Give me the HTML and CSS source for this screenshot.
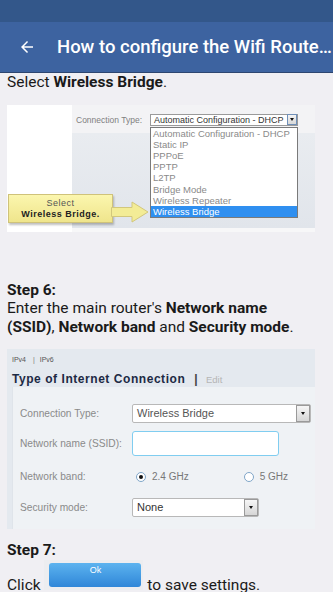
FILE: index.html
```html
<!DOCTYPE html>
<html>
<head>
<meta charset="utf-8">
<link rel="stylesheet" href="styles.css">
</head>
<body>
<div class="status"></div>
<header class="appbar">
  <svg class="back" width="18" height="18" viewBox="0 0 24 24"><path d="M20 11H7.83l5.59-5.59L12 4l-8 8 8 8 1.41-1.41L7.83 13H20v-2z" fill="#fff"/></svg>
  <h1 class="title">How to configure the Wifi Route…</h1>
</header>
<main class="content">
  <p class="line">Select <b>Wireless Bridge</b>.</p>

  <div class="shot1">
    <div class="s1-white"></div>
    <div class="s1-right">
      <div class="s1-band">
        <span class="s1-label">Connection Type:</span>
        <div class="s1-select">
          <span>Automatic Configuration - DHCP</span>
          <span class="dd-btn"><i class="tri"></i></span>
        </div>
      </div>
      <div class="s1-gray"></div>
    </div>
    <ul class="s1-list">
      <li>Automatic Configuration - DHCP</li>
      <li>Static IP</li>
      <li>PPPoE</li>
      <li>PPTP</li>
      <li>L2TP</li>
      <li>Bridge Mode</li>
      <li>Wireless Repeater</li>
      <li class="sel">Wireless Bridge</li>
    </ul>
    <div class="callout">Select<br><b>Wireless Bridge.</b></div>
    <svg class="arrow" width="38" height="22" viewBox="0 0 38 22"><path d="M0.5 6.5 H21 V1 L37 11 L21 21 V15.5 H0.5 Z" fill="#f3ec96" stroke="#d2c77c" stroke-width="1"/></svg>
  </div>

  <p class="line gap-top"><b>Step 6:</b><br>Enter the main router's <b>Network name (SSID)</b>, <b>Network band</b> and <b>Security mode</b>.</p>

  <div class="shot2">
    <div class="s2-head">
      <div class="s2-tabs">IPv4 <span class="bar">|</span> IPv6</div>
      <div class="s2-title"><b>Type of Internet Connection</b> <span class="pipe">|</span> <span class="edit">Edit</span></div>
    </div>
    <div class="s2-panel">
      <div class="row r1">
        <span class="lbl">Connection Type:</span>
        <div class="sel-box wide"><span>Wireless Bridge</span><span class="dd-btn big"><i class="tri"></i></span></div>
      </div>
      <div class="row r2">
        <span class="lbl">Network name (SSID):</span>
        <div class="input"></div>
      </div>
      <div class="row r3">
        <span class="lbl">Network band:</span>
        <div class="radios">
          <span class="radio on"></span><span class="rtxt">2.4 GHz</span>
          <span class="radio"></span><span class="rtxt">5 GHz</span>
        </div>
      </div>
      <div class="row r4">
        <span class="lbl">Security mode:</span>
        <div class="sel-box narrow"><span>None</span><span class="dd-btn big"><i class="tri"></i></span></div>
      </div>
    </div>
  </div>

  <p class="line step7"><b>Step 7:</b><br>Click <span class="okwrap"><span class="okbtn">Ok</span></span> to save settings.</p>
</main>
</body>
</html>
```

FILE: styles.css
```css
* { box-sizing: border-box; }
html, body { margin: 0; padding: 0; }
body {
  width: 333px;
  height: 592px;
  overflow: hidden;
  background: #f0eff3;
  font-family: Roboto, "Noto Sans", sans-serif;
  color: #1a1a1a;
}
.status { height: 22px; background: #33578a; }
.appbar {
  height: 51px;
  background: #3d63a0;
  border-bottom: 1px solid #2d4670;
  display: flex;
  align-items: center;
  padding-left: 18px;
}
.back { flex: none; }
.title {
  margin: 0 0 0 21px;
  font-size: 18.5px;
  font-weight: 500;
  color: #fff;
  white-space: nowrap;
}
.content { padding: 0 18px 0 7px; }
.line {
  margin: 0;
  font-size: 15.5px;
  line-height: 18.6px;
}
.line b { font-weight: 700; }
.gap-top { margin-top: 49px; }

/* screenshot 1 */
.shot1 {
  position: relative;
  margin-top: 13px;
  width: 308px;
  height: 127px;
  display: flex;
  background: #f7f7f8;
  font-family: "Liberation Sans", Arial, sans-serif;
}
.s1-white { width: 65px; height: 127px; background: #fff; }
.s1-right { flex: 1; display: flex; flex-direction: column; padding-bottom: 4px; }
.s1-band {
  height: 28px;
  background: #f3f3f5;
  display: flex;
  align-items: center;
  padding: 2px 0 0 4px;
}
.s1-label { font-size: 8.5px; color: #808080; width: 74px; }
.s1-select {
  width: 148px;
  height: 12px;
  background: #fff;
  border: 1px solid #9a9a9a;
  display: flex;
  align-items: center;
  justify-content: space-between;
  padding-left: 3px;
  font-size: 9px;
  color: #333;
}
.dd-btn {
  width: 10px;
  height: 11px;
  border: 1px solid #6f8fb8;
  background: linear-gradient(#f4f4f4, #d8d8d8);
  display: flex;
  align-items: center;
  justify-content: center;
}
.tri {
  width: 0; height: 0;
  border-left: 2.5px solid transparent;
  border-right: 2.5px solid transparent;
  border-top: 3px solid #111;
}
.s1-gray { flex: 1; background: linear-gradient(180deg, #e9ecf0, #e1e5eb); }
.s1-list {
  position: absolute;
  left: 143px;
  top: 22px;
  width: 148px;
  margin: 0;
  padding: 0;
  list-style: none;
  background: #fff;
  border: 1px solid #7a7a7a;
}
.s1-list li {
  height: 11.2px;
  line-height: 11.2px;
  font-size: 9.5px;
  color: #8a8a8a;
  padding-left: 2px;
}
.s1-list li.sel { background: #2f8ff0; color: #fff; }
.callout {
  position: absolute;
  left: 1px;
  top: 89px;
  width: 105px;
  height: 29px;
  background: linear-gradient(#fbf6ae, #efe58c);
  border: 1px solid #cfc27a;
  box-shadow: 1px 2px 2px rgba(0,0,0,0.25);
  text-align: center;
  font-size: 9px;
  line-height: 11px;
  padding-top: 3px;
  color: #555;
  letter-spacing: 0.5px;
}
.callout b { color: #222; }
.arrow { position: absolute; left: 104px; top: 96px; }

/* screenshot 2 */
.shot2 {
  margin-top: 13px;
  width: 308px;
  height: 180px;
  background: #e4e9ef;
  font-family: "Liberation Sans", Arial, sans-serif;
  display: flex;
  flex-direction: column;
}
.s2-head { height: 38px; padding: 5px 0 0 5px; }
.s2-tabs { font-size: 7px; color: #555; height: 11px; line-height: 11px; }
.s2-tabs .bar { margin: 0 3px 0 5px; color: #777; }
.s2-title { margin-top: 7px; font-size: 12px; color: #1d2a44; letter-spacing: 0.55px; }
.s2-title .pipe { margin: 0 4px 0 5px; color: #444; font-weight: bold; }
.s2-title .edit { color: #b5b5b5; font-size: 9.5px; letter-spacing: 0; }
.s2-panel {
  flex: 1;
  margin-left: 5px;
  background: #eff2f5;
  border-left: 1px solid #dfe4ea;
  padding: 16px 0 0 7px;
  display: flex;
  flex-direction: column;
}
.row { display: flex; align-items: center; }
.r1 { height: 20px; margin-bottom: 7px; }
.r2 { height: 26px; margin-bottom: 7px; }
.r3 { height: 27px; margin-bottom: 6px; }
.r4 { height: 22px; }
.lbl { width: 112px; font-size: 10.2px; color: #8a8a8a; }
.sel-box {
  height: 19px;
  background: #fff;
  border: 1px solid #b8b8b8;
  border-radius: 2px;
  display: flex;
  align-items: center;
  justify-content: space-between;
  padding-left: 4px;
  font-size: 11px;
  color: #555;
}
.sel-box.wide { width: 179px; }
.sel-box.narrow { width: 127px; color: #333; }
.dd-btn.big { width: 14px; height: 17px; border: 1px solid #9a9a9a; background: linear-gradient(#f6f6f6, #d6d6d6); }
.input {
  width: 147px;
  height: 25px;
  background: #fff;
  border: 1.5px solid #80cdf0;
  border-radius: 3px;
}
.radios { display: flex; align-items: center; font-size: 10px; color: #777; }
.radio {
  width: 10px; height: 10px;
  border-radius: 50%;
  border: 1px solid #7fa6c8;
  background: #fff;
  margin-left: 4px;
  display: flex;
  align-items: center;
  justify-content: center;
}
.radio.on::after { content: ""; width: 4px; height: 4px; border-radius: 50%; background: #111; }
.rtxt { margin-left: 6px; }
.rtxt:nth-of-type(2) { margin-right: 51px; }

.step7 { margin-top: 12px; }
.okwrap {
  display: inline-block;
  width: 99px;
  height: 30px;
  overflow: hidden;
  background: #ecedf0;
  vertical-align: baseline;
  padding: 3px 2px 0 5px;
}
.okbtn {
  display: block;
  width: 92px;
  height: 24px;
  border-radius: 3px;
  background: linear-gradient(#5cb3ef, #2f86d8);
  color: #fff;
  font-size: 9px;
  text-align: center;
  line-height: 14px;
  font-family: "Liberation Sans", Arial, sans-serif;
}
```
